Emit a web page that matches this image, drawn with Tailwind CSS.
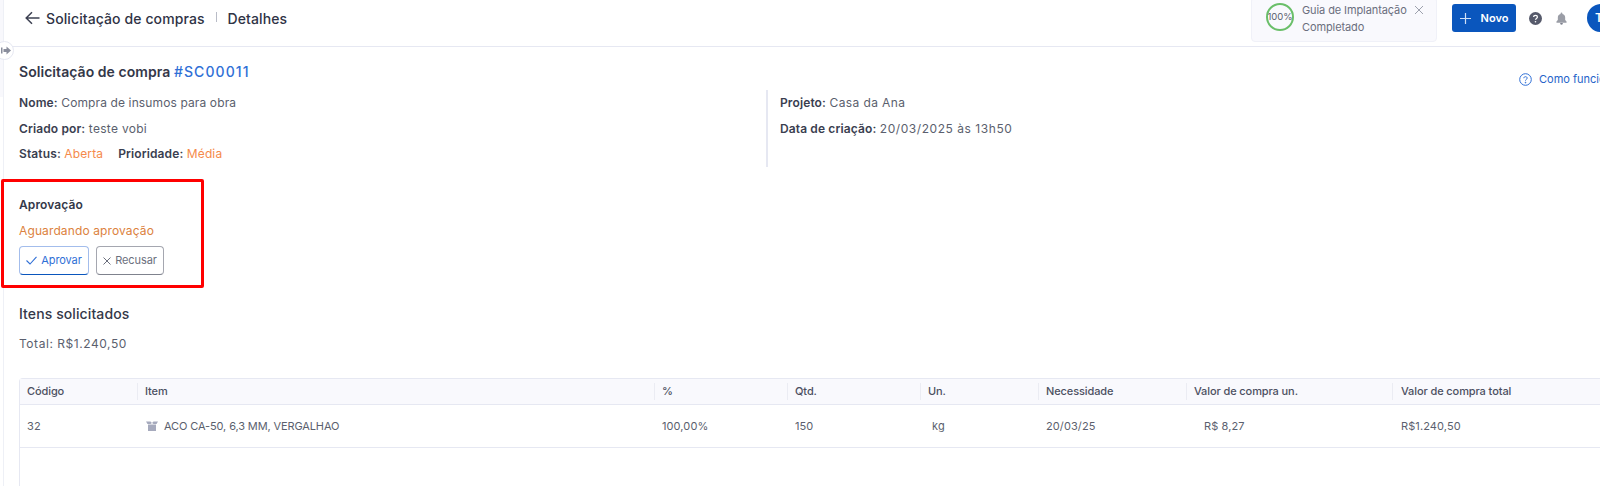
<!DOCTYPE html>
<html lang="pt-BR">
<head>
<meta charset="utf-8">
<script src="https://cdn.jsdelivr.net/npm/@tailwindcss/browser@4"></script>
<title>Solicitação de compras</title>
</head>
<body class="bg-white">
<div class="relative w-[1600px] h-[486px] overflow-hidden bg-white font-['Inter',sans-serif] text-[12px] text-[#5b5f6e]">

  <!-- Top bar -->
  <header class="h-[47px] border-b border-[#e6e8f2] flex items-center pl-[25px] pb-[10px] relative">
    <svg class="w-[15px] h-[14px] mr-[6px]" viewBox="0 0 15 14" fill="none" stroke="#3d4152" stroke-width="1.5"><path d="M14.500 7H1.200M7 1.200 1.200 7 7 12.800"/></svg>
    <span class="text-[14px] font-medium text-[#2f3345] tracking-[0.1px]">Solicitação de compras</span>
    <span class="w-px h-[10px] bg-[#b9bcc7] ml-[11px] mr-[11px] -mt-[2px]"></span>
    <span class="text-[14px] font-medium text-[#2f3345] tracking-[0.1px]">Detalhes</span>

    <div class="ml-auto flex items-center">
      <div class="w-[186px] h-[45px] mt-[3px] mr-[15px] flex items-center pl-[14px] pb-[5px] bg-[#f9f9fd] border border-[#f0f1f8] rounded-[4px]">
        <div class="w-[28px] h-[28px] rounded-full border-2 border-[#6abf69] flex items-center justify-center text-[9.500px] text-[#5b5f6e] shrink-0 whitespace-nowrap">100%</div>
        <div class="ml-[8px] mt-[3px] text-[11px] leading-[17px] text-[#6b6f7d] tracking-[-0.1px]">
          <div>Guia de Implantação</div>
          <div>Completado</div>
        </div>
        <svg class="w-[10px] h-[10px] ml-[7px] -mt-[15px]" viewBox="0 0 10 10" stroke="#9da1ad" stroke-width="1"><path d="M1 1l8 8M9 1l-8 8"/></svg>
      </div>
      <button class="w-[64px] h-[28px] bg-[#0a56bd] rounded-[3px] text-white text-[11px] font-semibold flex items-center justify-center gap-[10px] mr-[13px]">
        <svg class="w-[11px] h-[11px]" viewBox="0 0 11 11" stroke="#cfe0f7" stroke-width="1.200"><path d="M5.500 0v11M0 5.500h11"/></svg>
        Novo
      </button>
      <svg class="w-[13px] h-[13px] mr-[14px]" viewBox="0 0 13 13"><circle cx="6.500" cy="6.500" r="6.500" fill="#565a6b"/><path d="M4.600 5.100c0-1.100.9-1.700 1.900-1.700s1.900.6 1.900 1.600c0 1.400-1.900 1.400-1.900 2.700" fill="none" stroke="#fff" stroke-width="1.300"/><circle cx="6.500" cy="9.800" r=".8" fill="#fff"/></svg>
      <svg class="w-[11px] h-[13px] mr-[20px]" viewBox="0 0 12 13" fill="#9a9da6"><path d="M6 0c.6 0 1 .4 1 1v.5c2 .4 3 2 3 4V8l1.500 1.800V11H.5V9.800L2 8V5.500c0-2 1-3.600 3-4V1c0-.6.4-1 1-1z"/><path d="M4.500 11.600h3c0 .8-.7 1.400-1.500 1.400s-1.500-.6-1.500-1.400z" fill="#565a6b"/></svg>
      <div class="w-[28px] h-[28px] rounded-full bg-[#0a56bd] text-white text-[12px] font-semibold flex items-center pl-[8px] -mr-[15px] shrink-0">T</div>
    </div>
  </header>

  <!-- Left rail -->
  <div class="absolute left-0 top-0 w-[4px] h-[486px] border-r border-[#eef0f6]">
    <div class="h-[97px] bg-[#f8f8fc]"></div>
  </div>
  <div class="absolute left-[-5px] top-[41px] w-[19px] h-[19px] rounded-full bg-white border border-[#e6e8f2] flex items-center justify-center pl-[3px]">
    <svg class="w-[10px] h-[9px]" viewBox="0 0 10 9" fill="#8a8e9c"><path d="M0 1.500h1.500v6H0zM2.500 3H5.500V.5L10 4.500 5.500 8.500V6H2.500z"/></svg>
  </div>

  <!-- Content -->
  <main class="pl-[19px]">
    <h1 class="mt-[15px] h-[20px] leading-[20px] text-[14px] font-semibold text-[#343849] tracking-[0.05px]">Solicitação de compra <span class="text-[#2f6fd6] font-medium tracking-[1.1px]">#SC00011</span></h1>

    <div class="flex mt-[8px] tracking-[0.12px]">
      <div class="w-[747px] flex flex-col gap-[8px] pt-[4px] leading-[17.500px]">
        <p><b class="font-semibold text-[#3a3e50]">Nome:</b> Compra de insumos para obra</p>
        <p><b class="font-semibold text-[#3a3e50]">Criado por:</b> <span class="tracking-[0.3px]">teste vobi</span></p>
        <p><b class="font-semibold text-[#3a3e50]">Status:</b> <span class="text-[#f58a4b]">Aberta</span><b class="font-semibold text-[#3a3e50] ml-[15px]">Prioridade:</b> <span class="text-[#f58a4b]">Média</span></p>
      </div>
      <div class="h-[77px] border-l-2 border-[#e6e8f2] pl-[12px] flex flex-col gap-[8px] pt-[4px] leading-[17.500px]">
        <p><b class="font-semibold text-[#3a3e50]">Projeto:</b> <span class="tracking-[0.4px]">Casa da Ana</span></p>
        <p><b class="font-semibold text-[#3a3e50]">Data de criação:</b> <span class="tracking-[0.55px]">20/03/2025 às 13h50</span></p>
      </div>
    </div>

    <h2 class="mt-[29px] h-[18px] leading-[18px] font-semibold text-[#343849] tracking-[0.1px]">Aprovação</h2>
    <p class="mt-[8px] h-[18px] leading-[18px] text-[#dc8240] tracking-[0.12px]">Aguardando aprovação</p>
    <div class="flex gap-[7px] mt-[6px]">
      <button class="w-[70px] h-[29px] rounded-[4px] border border-[#a3bdec] border-b-[#0a56bd] bg-white text-[#2f6fd6] text-[11px] tracking-[-0.1px] flex items-center justify-center gap-[4px]">
        <svg class="w-[11px] h-[9px]" viewBox="0 0 11 9" fill="none" stroke="#2f6fd6" stroke-width="1.100"><path d="M.5 4.500 4 8 10.500.8"/></svg>
        Aprovar
      </button>
      <button class="w-[68px] h-[29px] rounded-[4px] border border-[#a5a7b0] border-b-[#7f828d] text-[#6b6f7d] text-[11px] tracking-[-0.1px] flex items-center justify-center gap-[4px]">
        <svg class="w-[8px] h-[8px]" viewBox="0 0 8 8" stroke="#6b6f7d" stroke-width="1"><path d="M.5.5l7 7M7.500.5l-7 7"/></svg>
        Recusar
      </button>
    </div>

    <h2 class="mt-[29px] h-[20px] leading-[20px] text-[14px] font-medium text-[#343849] tracking-[0.1px]">Itens solicitados</h2>
    <p class="mt-[11px] h-[18px] leading-[18px] text-[#5b5f6e] tracking-[0.55px]">Total: R$1.240,50</p>

    <!-- Table -->
    <section class="mt-[25px] w-[1700px] h-[120px] border-l border-t border-[#e6e8f2] rounded-tl-[4px]">
      <div class="grid grid-cols-[117px_517px_133px_133px_118px_148px_206px_1fr] h-[26px] bg-[#f9f9fd] border-b border-[#e6e8f2] items-center text-[11px] font-medium text-[#4c5062] tracking-[-0.1px]">
        <div class="pl-[7px]">Código</div>
        <div class="pl-[7px] border-l border-[#ebecf3] h-[17px] leading-[17px]">Item</div>
        <div class="pl-[7px] border-l border-[#ebecf3] h-[17px] leading-[17px]">%</div>
        <div class="pl-[7px] border-l border-[#ebecf3] h-[17px] leading-[17px]">Qtd.</div>
        <div class="pl-[7px] border-l border-[#ebecf3] h-[17px] leading-[17px]">Un.</div>
        <div class="pl-[7px] border-l border-[#ebecf3] h-[17px] leading-[17px]">Necessidade</div>
        <div class="pl-[7px] border-l border-[#ebecf3] h-[17px] leading-[17px]">Valor de compra un.</div>
        <div class="pl-[8px] border-l border-[#ebecf3] h-[17px] leading-[17px]">Valor de compra total</div>
      </div>
      <div class="grid grid-cols-[117px_517px_133px_133px_118px_148px_206px_1fr] h-[43px] border-b border-[#e6e8f2] items-center text-[11px] text-[#5b5f6e] tracking-[0.1px]">
        <div class="pl-[7px]">32</div>
        <div class="pl-[9px] flex items-center gap-[6px]">
          <svg class="w-[12px] h-[10px]" viewBox="0 0 12 10" fill="#a6aabd"><path d="M2 3.500h8V10H2z"/><path d="M0 .5h4.500L6 2 7.500.5H12L10.500 3H7.500L6 2 4.500 3h-3z"/></svg>
          <span class="tracking-[-0.12px]">ACO CA-50, 6,3 MM, VERGALHAO</span>
        </div>
        <div class="pl-[8px]">100,00%</div>
        <div class="pl-[8px]">150</div>
        <div class="pl-[12px]">kg</div>
        <div class="pl-[8px]">20/03/25</div>
        <div class="pl-[18px]">R$ 8,27</div>
        <div class="pl-[9px]">R$1.240,50</div>
      </div>
    </section>
  </main>

  <!-- Como funciona link -->
  <div class="absolute left-[1519px] top-[71px] flex items-center gap-[7px] text-[11px] text-[#2563c9] whitespace-nowrap">
    <svg class="w-[13px] h-[13px]" viewBox="0 0 13 13" fill="none" stroke="#2f6fd6" stroke-width="1"><circle cx="6.500" cy="6.500" r="5.800"/><path d="M4.800 5.200c0-1 .8-1.500 1.700-1.500s1.700.5 1.700 1.400c0 1.300-1.700 1.300-1.700 2.500"/><circle cx="6.500" cy="9.600" r=".4" fill="#2f6fd6"/></svg>
    Como funciona
  </div>

  <!-- Red annotation box -->
  <div class="absolute left-[1px] top-[179px] w-[203px] h-[109px] border-[3px] border-[#ff0000] rounded-[2px]"></div>
</div>
</body>
</html>
